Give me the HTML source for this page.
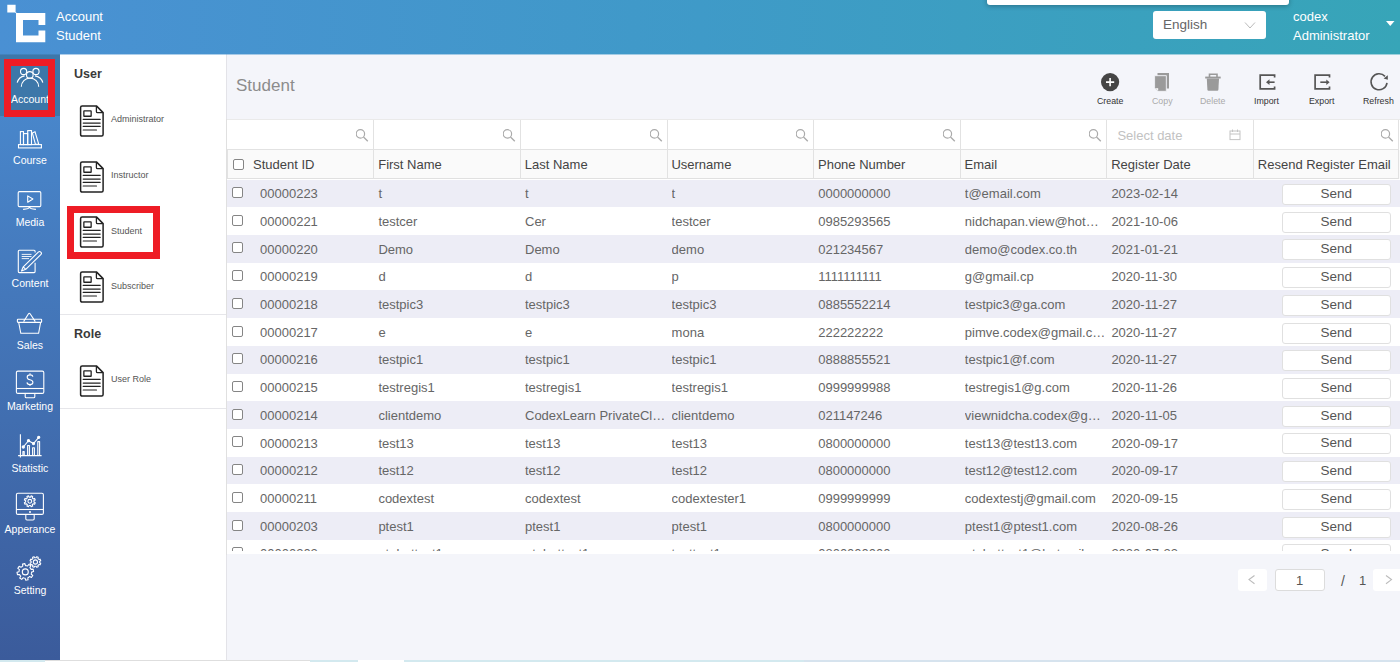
<!DOCTYPE html>
<html><head><meta charset="utf-8">
<style>
*{box-sizing:border-box;margin:0;padding:0}
html,body{width:1400px;height:662px;overflow:hidden;background:#f4f5fa;font-family:"Liberation Sans",sans-serif}
.abs{position:absolute}
#hdr{position:absolute;left:0;top:0;width:1400px;height:54px;background:linear-gradient(90deg,#4a90d3 0%,#3f9ac8 50%,#37a5b8 100%)}
#side{position:absolute;left:0;top:54px;width:60px;height:606px;background:linear-gradient(180deg,#4a8bd0 0%,#3b5b9b 100%)}
#menu{position:absolute;left:60px;top:54px;width:166px;height:606px;background:#fff}
#menuline{position:absolute;left:226px;top:54px;width:1px;height:606px;background:#e3e3e8}
.mi{position:absolute;left:79px;height:33px;width:140px}
.mi svg{position:absolute;left:0;top:0}
.mi span{position:absolute;left:32px;top:9.4px;font-size:9px;color:#555;white-space:nowrap}
.sec{position:absolute;left:74px;font-size:12.5px;font-weight:bold;color:#3a3a3a}
.div{position:absolute;left:60px;width:166px;height:1px;background:#e6e6ea}
.slab{position:absolute;left:0;width:60px;text-align:center;color:#fff;font-size:10.5px;white-space:nowrap}
.red{position:absolute;border:7px solid #ee1c25}
#title{position:absolute;left:236px;top:75.5px;font-size:17px;color:#8c8c8c}
.tb{position:absolute;top:96px;font-size:8.8px;color:#333;white-space:nowrap}
#filt{position:absolute;left:227px;top:119px;width:1173px;height:31px;background:#fff;border-top:1px solid #eaeaea}
.fc{position:absolute;top:0;height:30px;border-right:1.5px solid #e2e2e2;border-bottom:1.5px solid #e2e2e2}
.srch{position:absolute;right:3px;top:7.5px}
.ph{position:absolute;left:10px;top:7.5px;font-size:13px;color:#c2c2c2}
.cal{position:absolute;right:11.5px;top:9px}
#head{position:absolute;left:227px;top:150px;width:1173px;height:29px;background:#fafafa}
.hc{position:absolute;top:0;height:29px;border-right:1.5px solid #e2e2e2;border-bottom:1.5px solid #e0e0e0}
.hc span{position:absolute;top:7px;font-size:13px;color:#444;white-space:nowrap}
#body{position:absolute;left:227px;top:0;width:1173px;height:555px;overflow:hidden}
#bodyclip{position:absolute;left:227px;top:179px;width:1173px;height:375.3px;overflow:hidden;background:#fff}
.row{position:absolute;left:0;width:1173px;height:27.72px}
.c{position:absolute;top:6.6px;font-size:13px;color:#666;white-space:nowrap;overflow:hidden}
.cb{position:absolute;top:7.5px;width:11px;height:11px;border:1px solid #858585;border-radius:2px;background:#fff}
.send{position:absolute;left:1055px;top:4.5px;width:108.5px;height:21px;border:1px solid #e0e0e0;border-radius:3px;background:#fff;text-align:center;font-size:13.5px;line-height:18.2px;color:#555}
</style></head><body>
<div id="hdr"></div>
<svg class="abs" style="left:0;top:0" width="60" height="54" viewBox="0 0 60 54">
<path d="M7.3 4.7 H15.6 V12 L17 13.2 L16 13.2 L15 12.6 H7.3 Z" fill="#fff"/>
<path d="M16 13 H45.3 V25 H38.5 V20 H23 V35.4 H38.5 V30.4 H45.3 V42.3 H16 Z" fill="#fff"/>
</svg>
<div class="abs" style="left:56px;top:6.5px;font-size:13px;line-height:19px;color:#fff">Account<br>Student</div>
<div class="abs" style="left:987px;top:-4px;width:302px;height:9px;background:#fff;border-radius:3px;box-shadow:0 1px 5px rgba(0,0,0,.3)"></div>
<div class="abs" style="left:1152.5px;top:11px;width:113px;height:28px;background:#fff;border-radius:3px"></div>
<div class="abs" style="left:1163px;top:17px;font-size:13.5px;color:#666">English</div>
<svg class="abs" style="left:1243px;top:20px" width="14" height="10" viewBox="0 0 14 10"><path d="M2 2.5 L7 8 L12 2.5" fill="none" stroke="#bbb" stroke-width="1"/></svg>
<div class="abs" style="left:1293px;top:6.5px;font-size:13px;line-height:19.5px;color:#fff">codex<br>Administrator</div>
<svg class="abs" style="left:1384px;top:19px" width="12" height="9" viewBox="0 0 12 9"><path d="M2 2 H10.5 L6.25 7 Z" fill="#fff"/></svg>

<div id="side"></div>
<div class="abs" style="left:0;top:54px;width:60px;height:62px;background:#3d77a9"></div>
<svg class="abs" style="left:0;top:0" width="60" height="662" viewBox="0 0 60 662" fill="none" stroke="#fff" stroke-width="1.1">
<!-- account -->
<circle cx="23.6" cy="71.5" r="3.1"/><circle cx="36" cy="71.5" r="3.1"/>
<circle cx="29.8" cy="74.9" r="3.3" fill="#3d77a9"/>
<path d="M17.2 82.6 A9.5 9.5 0 0 1 24.6 75.9"/><path d="M42.8 82.6 A9.5 9.5 0 0 0 35.0 75.9"/>
<path d="M21.3 86.8 A8.7 8.7 0 0 1 38.7 86.8"/>
<!-- course -->
<rect x="18.5" y="144.6" width="22.9" height="3.3"/>
<rect x="20.4" y="131.6" width="3.1" height="13"/>
<rect x="23.5" y="133.6" width="4.2" height="11"/>
<rect x="27.7" y="130.6" width="3.8" height="14"/>
<path d="M32.3 132.9 L35.0 131.7 L38.7 144.0 L35.4 144.2 Z"/>
<!-- media -->
<rect x="18.2" y="191.6" width="22.6" height="15" rx="1.2"/>
<path d="M27.7 195.9 L32.9 199 L27.7 202.2 Z" stroke-linejoin="round"/>
<path d="M29.5 206.8 Q29.4 209.1 23.1 209.4 M29.5 206.8 Q29.6 209.1 35.9 209.4"/>
<!-- content -->
<path d="M35.1 252.4 V251.2 Q35.1 250.2 34.1 250.2 H19.3 Q18.3 250.2 18.3 251.2 V271.6 Q18.3 272.6 19.3 272.6 H34.1 Q35.1 272.6 35.1 271.6 V262.8"/>
<path d="M21.7 254.4 H31.5 M21.7 256.5 H31.5 M21.7 258.6 H29" stroke-width="0.9"/>
<g transform="translate(21.5 271) rotate(-44.3)"><path d="M0 0 L4.2 -1.8 H25.2 A1.8 1.8 0 0 1 25.2 1.8 H4.2 Z M4.2 -1.8 V1.8" stroke-linejoin="round"/></g>
<!-- sales -->
<path d="M23.6 321.6 L28.5 313.8 Q29.3 312.8 30.1 313.8 L35.3 321.6"/>
<rect x="17.4" y="319.2" width="24.2" height="3.2" rx="0.6"/>
<path d="M18.7 322.5 L20.8 333.3 H38.6 L40.6 322.5"/>
<!-- marketing -->
<rect x="16.4" y="371.1" width="27.4" height="22.3" rx="1.5"/>
<path d="M16.4 388.5 H43.8"/>
<path d="M25.2 393.5 V396.8 Q25.2 397.8 26.2 397.8 H33.8 Q34.8 397.8 34.8 396.8 V393.5"/>
<!-- statistic -->
<path d="M20.4 434.3 V457.4 M18.1 455.6 H41.6"/>
<path d="M22.9 455.4 V451.6 H24.2 V455.4 M27.6 455.4 V445.5 H29.4 V455.4 M32.6 455.4 V447.7 H34.4 V455.4 M37.8 455.4 V441.6 H39.6 V455.4" stroke-linejoin="round"/>
<path d="M23.3 447 L28.5 440.7 L33.5 443.6 L38.7 437.3"/>
<circle cx="23.3" cy="447" r="1.1" fill="#fff"/><circle cx="28.5" cy="440.7" r="1.1" fill="#fff"/><circle cx="33.5" cy="443.6" r="1.1" fill="#fff"/><circle cx="38.7" cy="437.3" r="1.1" fill="#fff"/>
<!-- appearance -->
<rect x="16.4" y="493.2" width="27" height="21.2" rx="1.5"/>
<path d="M16.4 509.5 H43.4"/>
<path d="M25.8 514.4 V518.8 Q25.8 520 27 520 H33 Q34.2 520 34.2 518.8 V514.4"/>
<!-- setting -->
</svg>
<div class="abs" style="left:29px;top:510.5px;width:2px;height:2px;background:#fff;border-radius:1px"></div>
<svg class="abs" style="left:0;top:0" width="60" height="662" viewBox="0 0 60 662">
<path d="M32.8 376.8 Q32.6 374.9 30 374.9 Q27.2 374.9 27.2 377.2 Q27.2 379.2 30 379.7 Q32.9 380.2 32.9 382.5 Q32.9 384.5 30 384.5 Q27.2 384.5 27 382.4 M30 373.3 V374.9 M30 384.5 V385.9" fill="none" stroke="#fff" stroke-width="1.1"/>
<path d="M31.47 573.15 L31.18 574.17 L32.78 575.49 L31.44 577.48 L29.61 576.49 L28.78 577.15 L27.85 577.66 L28.05 579.73 L25.69 580.19 L25.10 578.20 L24.05 578.07 L23.03 577.78 L21.71 579.38 L19.72 578.04 L20.71 576.21 L20.05 575.38 L19.54 574.45 L17.47 574.65 L17.01 572.29 L19.00 571.70 L19.13 570.65 L19.42 569.63 L17.82 568.31 L19.16 566.32 L20.99 567.31 L21.82 566.65 L22.75 566.14 L22.55 564.07 L24.91 563.61 L25.50 565.60 L26.55 565.73 L27.57 566.02 L28.89 564.42 L30.88 565.76 L29.89 567.59 L30.55 568.42 L31.06 569.35 L33.13 569.15 L33.59 571.51 L31.60 572.10 Z" fill="none" stroke="#fff" stroke-width="1.1" stroke-linejoin="round"/><circle cx="25.3" cy="571.9" r="3" fill="none" stroke="#fff" stroke-width="1.1"/><path d="M39.70 562.00 L39.64 562.72 L40.73 563.35 L40.12 564.82 L38.91 564.49 L38.44 565.04 L37.89 565.51 L38.22 566.72 L36.75 567.33 L36.12 566.24 L35.40 566.30 L34.68 566.24 L34.05 567.33 L32.58 566.72 L32.91 565.51 L32.36 565.04 L31.89 564.49 L30.68 564.82 L30.07 563.35 L31.16 562.72 L31.10 562.00 L31.16 561.28 L30.07 560.65 L30.68 559.18 L31.89 559.51 L32.36 558.96 L32.91 558.49 L32.58 557.28 L34.05 556.67 L34.68 557.76 L35.40 557.70 L36.12 557.76 L36.75 556.67 L38.22 557.28 L37.89 558.49 L38.44 558.96 L38.91 559.51 L40.12 559.18 L40.73 560.65 L39.64 561.28 Z" fill="none" stroke="#fff" stroke-width="1.1" stroke-linejoin="round"/><circle cx="35.4" cy="562" r="2.1" fill="none" stroke="#fff" stroke-width="1.1"/><path d="M34.00 501.30 L33.94 502.01 L35.23 502.67 L34.61 504.17 L33.23 503.73 L32.77 504.27 L32.23 504.73 L32.67 506.11 L31.17 506.73 L30.51 505.44 L29.80 505.50 L29.09 505.44 L28.43 506.73 L26.93 506.11 L27.37 504.73 L26.83 504.27 L26.37 503.73 L24.99 504.17 L24.37 502.67 L25.66 502.01 L25.60 501.30 L25.66 500.59 L24.37 499.93 L24.99 498.43 L26.37 498.87 L26.83 498.33 L27.37 497.87 L26.93 496.49 L28.43 495.87 L29.09 497.16 L29.80 497.10 L30.51 497.16 L31.17 495.87 L32.67 496.49 L32.23 497.87 L32.77 498.33 L33.23 498.87 L34.61 498.43 L35.23 499.93 L33.94 500.59 Z" fill="none" stroke="#fff" stroke-width="1.1" stroke-linejoin="round"/><circle cx="29.8" cy="501.3" r="1.9" fill="none" stroke="#fff" stroke-width="1.1"/>
</svg>
<div class="slab" style="top:92.9px">Account</div>
<div class="slab" style="top:154.4px">Course</div>
<div class="slab" style="top:215.9px">Media</div>
<div class="slab" style="top:276.9px">Content</div>
<div class="slab" style="top:338.9px">Sales</div>
<div class="slab" style="top:400.4px">Marketing</div>
<div class="slab" style="top:461.9px">Statistic</div>
<div class="slab" style="top:522.9px">Apperance</div>
<div class="slab" style="top:584.4px">Setting</div>
<div class="red" style="left:4px;top:59px;width:51px;height:58px"></div>

<div id="menu"></div>
<div id="menuline"></div>
<div class="sec" style="top:67px">User</div>
<div class="sec" style="top:327px">Role</div>
<div class="div" style="top:314px"></div>
<div class="div" style="top:408px"></div>
<div class="mi" style="top:105.0px"><svg width="26" height="33" viewBox="0 0 26 33"><path d="M3 0.9 H17.4 L24.1 7.6 V29.5 Q24.1 31 22.6 31 H3.1 Q1.6 31 1.6 29.5 V2.4 Q1.6 0.9 3.1 0.9 Z" fill="#fff" stroke="#222" stroke-width="1.5" stroke-linejoin="round"/><path d="M17.4 0.9 V6.4 Q17.4 7.6 18.6 7.6 H24.1" fill="none" stroke="#222" stroke-width="1.3"/><rect x="4.85" y="5.95" width="7.3" height="5.3" rx="0.3" fill="none" stroke="#222" stroke-width="1.3"/><path d="M4.2 14.4 H21.2 M4.2 18.1 H21.2 M4.2 21.4 H21.2 M4.2 25 H17.5" stroke="#222" stroke-width="1.15" stroke-linecap="round"/></svg><span>Administrator</span></div>
<div class="mi" style="top:160.6px"><svg width="26" height="33" viewBox="0 0 26 33"><path d="M3 0.9 H17.4 L24.1 7.6 V29.5 Q24.1 31 22.6 31 H3.1 Q1.6 31 1.6 29.5 V2.4 Q1.6 0.9 3.1 0.9 Z" fill="#fff" stroke="#222" stroke-width="1.5" stroke-linejoin="round"/><path d="M17.4 0.9 V6.4 Q17.4 7.6 18.6 7.6 H24.1" fill="none" stroke="#222" stroke-width="1.3"/><rect x="4.85" y="5.95" width="7.3" height="5.3" rx="0.3" fill="none" stroke="#222" stroke-width="1.3"/><path d="M4.2 14.4 H21.2 M4.2 18.1 H21.2 M4.2 21.4 H21.2 M4.2 25 H17.5" stroke="#222" stroke-width="1.15" stroke-linecap="round"/></svg><span>Instructor</span></div>
<div class="mi" style="top:216.2px"><svg width="26" height="33" viewBox="0 0 26 33"><path d="M3 0.9 H17.4 L24.1 7.6 V29.5 Q24.1 31 22.6 31 H3.1 Q1.6 31 1.6 29.5 V2.4 Q1.6 0.9 3.1 0.9 Z" fill="#fff" stroke="#222" stroke-width="1.5" stroke-linejoin="round"/><path d="M17.4 0.9 V6.4 Q17.4 7.6 18.6 7.6 H24.1" fill="none" stroke="#222" stroke-width="1.3"/><rect x="4.85" y="5.95" width="7.3" height="5.3" rx="0.3" fill="none" stroke="#222" stroke-width="1.3"/><path d="M4.2 14.4 H21.2 M4.2 18.1 H21.2 M4.2 21.4 H21.2 M4.2 25 H17.5" stroke="#222" stroke-width="1.15" stroke-linecap="round"/></svg><span>Student</span></div>
<div class="mi" style="top:271.3px"><svg width="26" height="33" viewBox="0 0 26 33"><path d="M3 0.9 H17.4 L24.1 7.6 V29.5 Q24.1 31 22.6 31 H3.1 Q1.6 31 1.6 29.5 V2.4 Q1.6 0.9 3.1 0.9 Z" fill="#fff" stroke="#222" stroke-width="1.5" stroke-linejoin="round"/><path d="M17.4 0.9 V6.4 Q17.4 7.6 18.6 7.6 H24.1" fill="none" stroke="#222" stroke-width="1.3"/><rect x="4.85" y="5.95" width="7.3" height="5.3" rx="0.3" fill="none" stroke="#222" stroke-width="1.3"/><path d="M4.2 14.4 H21.2 M4.2 18.1 H21.2 M4.2 21.4 H21.2 M4.2 25 H17.5" stroke="#222" stroke-width="1.15" stroke-linecap="round"/></svg><span>Subscriber</span></div>
<div class="mi" style="top:365.1px"><svg width="26" height="33" viewBox="0 0 26 33"><path d="M3 0.9 H17.4 L24.1 7.6 V29.5 Q24.1 31 22.6 31 H3.1 Q1.6 31 1.6 29.5 V2.4 Q1.6 0.9 3.1 0.9 Z" fill="#fff" stroke="#222" stroke-width="1.5" stroke-linejoin="round"/><path d="M17.4 0.9 V6.4 Q17.4 7.6 18.6 7.6 H24.1" fill="none" stroke="#222" stroke-width="1.3"/><rect x="4.85" y="5.95" width="7.3" height="5.3" rx="0.3" fill="none" stroke="#222" stroke-width="1.3"/><path d="M4.2 14.4 H21.2 M4.2 18.1 H21.2 M4.2 21.4 H21.2 M4.2 25 H17.5" stroke="#222" stroke-width="1.15" stroke-linecap="round"/></svg><span>User Role</span></div>
<div class="red" style="left:67px;top:206px;width:93px;height:53px"></div>

<div class="abs" style="left:227px;top:54px;width:1173px;height:65px;background:#f4f5fa"></div>
<div class="abs" style="left:0;top:54px;width:1400px;height:1px;background:linear-gradient(90deg,#4a90d3 0%,#3f9ac8 50%,#37a5b8 100%);opacity:.45"></div>
<div id="title">Student</div>
<svg class="abs" style="left:1090px;top:65px" width="310" height="30" viewBox="1090 65 310 30">
<circle cx="1110.1" cy="82.1" r="9.1" fill="#454545"/>
<path d="M1106 82.1 H1114.2 M1110.1 78 V86.2" stroke="#fff" stroke-width="1.6"/>
<path d="M1157.5 73 H1169 V88.6 H1166.5 V75.5 H1157.5 Z" fill="#9a9a9a"/>
<path d="M1154.6 75.7 H1166.3 V91.3 H1158 L1154.6 87.9 Z" fill="#9a9a9a" stroke="#f4f5fa" stroke-width="0.8"/>
<path d="M1155.5 88.2 L1158.2 88.2 L1158.2 90.6" fill="#fff"/>
<path d="M1209.5 77 V74.3 H1217 V77" fill="none" stroke="#9a9a9a" stroke-width="1.6"/>
<rect x="1205.2" y="76.6" width="15.5" height="1.9" fill="#9a9a9a"/>
<path d="M1206.8 78.4 H1219 L1218.4 89.7 Q1218.3 90.7 1217.3 90.7 H1208.5 Q1207.5 90.7 1207.4 89.7 Z" fill="#9a9a9a"/>
<path d="M1274.6 77.4 V75.2 H1260.2 V88.8 H1274.6 V86.6" fill="none" stroke="#555" stroke-width="1.7"/>
<path d="M1274.6 82.2 H1267.5" stroke="#555" stroke-width="1.6"/><path d="M1266 82.2 L1269.5 79.3 V85.1 Z" fill="#555"/>
<path d="M1329.5 77.4 V75.2 H1315.1 V88.8 H1329.5 V86.6" fill="none" stroke="#555" stroke-width="1.7"/>
<path d="M1320.3 82.2 H1327.5" stroke="#555" stroke-width="1.6"/><path d="M1329.6 82.2 L1326.3 79.5 V84.9 Z" fill="#555"/>
<path d="M1385.0 76.4 A8 8 0 1 0 1387.0 82.8" fill="none" stroke="#555" stroke-width="1.6"/>
<path d="M1387.8 75.2 L1387.8 79.8 L1383.6 78.6 Z" fill="#555"/>
</svg>
<div class="tb" style="left:1097px">Create</div>
<div class="tb" style="left:1152px;color:#aaa">Copy</div>
<div class="tb" style="left:1200px;color:#aaa">Delete</div>
<div class="tb" style="left:1254px">Import</div>
<div class="tb" style="left:1309px">Export</div>
<div class="tb" style="left:1363px">Refresh</div>

<div id="filt"><div class="fc" style="left:0.0px;width:147.4px"><svg class="srch" width="14" height="14" viewBox="0 0 14 14"><circle cx="4.4" cy="5.9" r="4.2" fill="none" stroke="#aaa" stroke-width="1.2"/><line x1="7.5" y1="9.0" x2="11.8" y2="13.3" stroke="#aaa" stroke-width="1.3"/></svg></div><div class="fc" style="left:147.4px;width:146.6px"><svg class="srch" width="14" height="14" viewBox="0 0 14 14"><circle cx="4.4" cy="5.9" r="4.2" fill="none" stroke="#aaa" stroke-width="1.2"/><line x1="7.5" y1="9.0" x2="11.8" y2="13.3" stroke="#aaa" stroke-width="1.3"/></svg></div><div class="fc" style="left:294.0px;width:146.6px"><svg class="srch" width="14" height="14" viewBox="0 0 14 14"><circle cx="4.4" cy="5.9" r="4.2" fill="none" stroke="#aaa" stroke-width="1.2"/><line x1="7.5" y1="9.0" x2="11.8" y2="13.3" stroke="#aaa" stroke-width="1.3"/></svg></div><div class="fc" style="left:440.6px;width:146.6px"><svg class="srch" width="14" height="14" viewBox="0 0 14 14"><circle cx="4.4" cy="5.9" r="4.2" fill="none" stroke="#aaa" stroke-width="1.2"/><line x1="7.5" y1="9.0" x2="11.8" y2="13.3" stroke="#aaa" stroke-width="1.3"/></svg></div><div class="fc" style="left:587.2px;width:146.6px"><svg class="srch" width="14" height="14" viewBox="0 0 14 14"><circle cx="4.4" cy="5.9" r="4.2" fill="none" stroke="#aaa" stroke-width="1.2"/><line x1="7.5" y1="9.0" x2="11.8" y2="13.3" stroke="#aaa" stroke-width="1.3"/></svg></div><div class="fc" style="left:733.8px;width:146.6px"><svg class="srch" width="14" height="14" viewBox="0 0 14 14"><circle cx="4.4" cy="5.9" r="4.2" fill="none" stroke="#aaa" stroke-width="1.2"/><line x1="7.5" y1="9.0" x2="11.8" y2="13.3" stroke="#aaa" stroke-width="1.3"/></svg></div><div class="fc" style="left:880.4px;width:146.6px"><span class="ph">Select date</span><svg class="cal" width="12" height="12" viewBox="0 0 12 12"><rect x="1" y="2" width="10" height="8.6" fill="none" stroke="#c4c4c4" stroke-width="1"/><line x1="1" y1="5" x2="11" y2="5" stroke="#c4c4c4"/><line x1="3.5" y1="0.5" x2="3.5" y2="3" stroke="#c4c4c4"/><line x1="8.5" y1="0.5" x2="8.5" y2="3" stroke="#c4c4c4"/></svg></div><div class="fc" style="left:1027.0px;width:145.4px"><svg class="srch" width="14" height="14" viewBox="0 0 14 14"><circle cx="4.4" cy="5.9" r="4.2" fill="none" stroke="#aaa" stroke-width="1.2"/><line x1="7.5" y1="9.0" x2="11.8" y2="13.3" stroke="#aaa" stroke-width="1.3"/></svg></div></div>
<div class="abs" style="left:226px;top:119px;width:1px;height:436px;background:#e0e0e0"></div>
<div id="head"><div class="hc" style="left:0.0px;width:147.4px"><div class="cb" style="left:5.8px;top:9px"></div><span style="left:26px">Student ID</span></div><div class="hc" style="left:147.4px;width:146.6px"><span style="left:3.8px">First Name</span></div><div class="hc" style="left:294.0px;width:146.6px"><span style="left:3.8px">Last Name</span></div><div class="hc" style="left:440.6px;width:146.6px"><span style="left:3.8px">Username</span></div><div class="hc" style="left:587.2px;width:146.6px"><span style="left:3.8px">Phone Number</span></div><div class="hc" style="left:733.8px;width:146.6px"><span style="left:3.8px">Email</span></div><div class="hc" style="left:880.4px;width:146.6px"><span style="left:3.8px">Register Date</span></div><div class="hc" style="left:1027.0px;width:145.4px"><span style="left:3.8px">Resend Register Email</span></div></div>
<div class="abs" style="left:227px;top:150px;width:1px;height:28px;background:#e2e2e2"></div>
<div id="bodyclip"><div class="abs" style="left:0;top:-179px;width:1173px;height:600px">
<div class="row" style="top:179.50px;background:#ededf6"><div class="cb" style="left:5px"></div><div class="c" style="left:33px;width:110px">00000223</div><div class="c" style="left:151.4px;width:139px">t</div><div class="c" style="left:298.0px;width:139px">t</div><div class="c" style="left:444.6px;width:139px">t</div><div class="c" style="left:591.2px;width:139px">0000000000</div><div class="c" style="left:737.8px;width:139px">t@email.com</div><div class="c" style="left:884.4px;width:139px">2023-02-14</div><div class="send">Send</div></div>
<div class="row" style="top:207.22px;background:#ffffff"><div class="cb" style="left:5px"></div><div class="c" style="left:33px;width:110px">00000221</div><div class="c" style="left:151.4px;width:139px">testcer</div><div class="c" style="left:298.0px;width:139px">Cer</div><div class="c" style="left:444.6px;width:139px">testcer</div><div class="c" style="left:591.2px;width:139px">0985293565</div><div class="c" style="left:737.8px;width:139px">nidchapan.view@hot…</div><div class="c" style="left:884.4px;width:139px">2021-10-06</div><div class="send">Send</div></div>
<div class="row" style="top:234.94px;background:#ededf6"><div class="cb" style="left:5px"></div><div class="c" style="left:33px;width:110px">00000220</div><div class="c" style="left:151.4px;width:139px">Demo</div><div class="c" style="left:298.0px;width:139px">Demo</div><div class="c" style="left:444.6px;width:139px">demo</div><div class="c" style="left:591.2px;width:139px">021234567</div><div class="c" style="left:737.8px;width:139px">demo@codex.co.th</div><div class="c" style="left:884.4px;width:139px">2021-01-21</div><div class="send">Send</div></div>
<div class="row" style="top:262.66px;background:#ffffff"><div class="cb" style="left:5px"></div><div class="c" style="left:33px;width:110px">00000219</div><div class="c" style="left:151.4px;width:139px">d</div><div class="c" style="left:298.0px;width:139px">d</div><div class="c" style="left:444.6px;width:139px">p</div><div class="c" style="left:591.2px;width:139px">1111111111</div><div class="c" style="left:737.8px;width:139px">g@gmail.cp</div><div class="c" style="left:884.4px;width:139px">2020-11-30</div><div class="send">Send</div></div>
<div class="row" style="top:290.38px;background:#ededf6"><div class="cb" style="left:5px"></div><div class="c" style="left:33px;width:110px">00000218</div><div class="c" style="left:151.4px;width:139px">testpic3</div><div class="c" style="left:298.0px;width:139px">testpic3</div><div class="c" style="left:444.6px;width:139px">testpic3</div><div class="c" style="left:591.2px;width:139px">0885552214</div><div class="c" style="left:737.8px;width:139px">testpic3@ga.com</div><div class="c" style="left:884.4px;width:139px">2020-11-27</div><div class="send">Send</div></div>
<div class="row" style="top:318.10px;background:#ffffff"><div class="cb" style="left:5px"></div><div class="c" style="left:33px;width:110px">00000217</div><div class="c" style="left:151.4px;width:139px">e</div><div class="c" style="left:298.0px;width:139px">e</div><div class="c" style="left:444.6px;width:139px">mona</div><div class="c" style="left:591.2px;width:139px">222222222</div><div class="c" style="left:737.8px;width:139px">pimve.codex@gmail.c…</div><div class="c" style="left:884.4px;width:139px">2020-11-27</div><div class="send">Send</div></div>
<div class="row" style="top:345.82px;background:#ededf6"><div class="cb" style="left:5px"></div><div class="c" style="left:33px;width:110px">00000216</div><div class="c" style="left:151.4px;width:139px">testpic1</div><div class="c" style="left:298.0px;width:139px">testpic1</div><div class="c" style="left:444.6px;width:139px">testpic1</div><div class="c" style="left:591.2px;width:139px">0888855521</div><div class="c" style="left:737.8px;width:139px">testpic1@f.com</div><div class="c" style="left:884.4px;width:139px">2020-11-27</div><div class="send">Send</div></div>
<div class="row" style="top:373.54px;background:#ffffff"><div class="cb" style="left:5px"></div><div class="c" style="left:33px;width:110px">00000215</div><div class="c" style="left:151.4px;width:139px">testregis1</div><div class="c" style="left:298.0px;width:139px">testregis1</div><div class="c" style="left:444.6px;width:139px">testregis1</div><div class="c" style="left:591.2px;width:139px">0999999988</div><div class="c" style="left:737.8px;width:139px">testregis1@g.com</div><div class="c" style="left:884.4px;width:139px">2020-11-26</div><div class="send">Send</div></div>
<div class="row" style="top:401.26px;background:#ededf6"><div class="cb" style="left:5px"></div><div class="c" style="left:33px;width:110px">00000214</div><div class="c" style="left:151.4px;width:139px">clientdemo</div><div class="c" style="left:298.0px;width:139px">CodexLearn PrivateCl…</div><div class="c" style="left:444.6px;width:139px">clientdemo</div><div class="c" style="left:591.2px;width:139px">021147246</div><div class="c" style="left:737.8px;width:139px">viewnidcha.codex@g…</div><div class="c" style="left:884.4px;width:139px">2020-11-05</div><div class="send">Send</div></div>
<div class="row" style="top:428.98px;background:#ffffff"><div class="cb" style="left:5px"></div><div class="c" style="left:33px;width:110px">00000213</div><div class="c" style="left:151.4px;width:139px">test13</div><div class="c" style="left:298.0px;width:139px">test13</div><div class="c" style="left:444.6px;width:139px">test13</div><div class="c" style="left:591.2px;width:139px">0800000000</div><div class="c" style="left:737.8px;width:139px">test13@test13.com</div><div class="c" style="left:884.4px;width:139px">2020-09-17</div><div class="send">Send</div></div>
<div class="row" style="top:456.70px;background:#ededf6"><div class="cb" style="left:5px"></div><div class="c" style="left:33px;width:110px">00000212</div><div class="c" style="left:151.4px;width:139px">test12</div><div class="c" style="left:298.0px;width:139px">test12</div><div class="c" style="left:444.6px;width:139px">test12</div><div class="c" style="left:591.2px;width:139px">0800000000</div><div class="c" style="left:737.8px;width:139px">test12@test12.com</div><div class="c" style="left:884.4px;width:139px">2020-09-17</div><div class="send">Send</div></div>
<div class="row" style="top:484.42px;background:#ffffff"><div class="cb" style="left:5px"></div><div class="c" style="left:33px;width:110px">00000211</div><div class="c" style="left:151.4px;width:139px">codextest</div><div class="c" style="left:298.0px;width:139px">codextest</div><div class="c" style="left:444.6px;width:139px">codextester1</div><div class="c" style="left:591.2px;width:139px">0999999999</div><div class="c" style="left:737.8px;width:139px">codextestj@gmail.com</div><div class="c" style="left:884.4px;width:139px">2020-09-15</div><div class="send">Send</div></div>
<div class="row" style="top:512.14px;background:#ededf6"><div class="cb" style="left:5px"></div><div class="c" style="left:33px;width:110px">00000203</div><div class="c" style="left:151.4px;width:139px">ptest1</div><div class="c" style="left:298.0px;width:139px">ptest1</div><div class="c" style="left:444.6px;width:139px">ptest1</div><div class="c" style="left:591.2px;width:139px">0800000000</div><div class="c" style="left:737.8px;width:139px">ptest1@ptest1.com</div><div class="c" style="left:884.4px;width:139px">2020-08-26</div><div class="send">Send</div></div>
<div class="row" style="top:539.86px;background:#ffffff"><div class="cb" style="left:5px"></div><div class="c" style="left:33px;width:110px">00000202</div><div class="c" style="left:151.4px;width:139px">ptubettest1</div><div class="c" style="left:298.0px;width:139px">ptubettest1</div><div class="c" style="left:444.6px;width:139px">testtest1</div><div class="c" style="left:591.2px;width:139px">0800000000</div><div class="c" style="left:737.8px;width:139px">ptubettest1@hotmail.com</div><div class="c" style="left:884.4px;width:139px">2020-07-23</div><div class="send">Send</div></div>
<div class="abs" style="left:0;top:551px;width:1173px;height:10px;background:#fff"></div>
</div></div>

<div class="abs" style="left:1238px;top:569px;width:29px;height:22px;background:#fff;border-radius:3px"></div>
<svg class="abs" style="left:1246px;top:574px" width="12" height="12" viewBox="0 0 12 12"><path d="M8.5 1.5 L3 5.6 L8.5 9.8" fill="none" stroke="#bbb" stroke-width="1.1"/></svg>
<div class="abs" style="left:1274.5px;top:569px;width:50px;height:21.5px;background:#fff;border:1px solid #dcdcdc;border-radius:3px;text-align:center;font-size:13px;line-height:21px;color:#555">1</div>
<div class="abs" style="left:1341px;top:573px;font-size:14px;color:#555">/</div>
<div class="abs" style="left:1359px;top:573px;font-size:13px;color:#555">1</div>
<div class="abs" style="left:1373px;top:569px;width:29px;height:22px;background:#fff;border-radius:3px"></div>
<svg class="abs" style="left:1383px;top:574px" width="12" height="12" viewBox="0 0 12 12"><path d="M3 1.5 L8.5 5.6 L3 9.8" fill="none" stroke="#bbb" stroke-width="1.1"/></svg>

<div class="abs" style="left:0;top:660px;width:1400px;height:2px;background:#d6e3ee"></div>
<div class="abs" style="left:0;top:660px;width:45px;height:2px;background:#d3e9ef"></div>
<div class="abs" style="left:45px;top:660px;width:265px;height:2px;background:#fff;border-top:1px solid #dedede"></div>
<div class="abs" style="left:310px;top:660px;width:48px;height:2px;background:#d3e9ef"></div>
<div class="abs" style="left:358px;top:660px;width:46px;height:2px;background:#fff"></div>
<div class="abs" style="left:404px;top:660px;width:400px;height:2px;background:#d3e9ef"></div>
</body></html>
